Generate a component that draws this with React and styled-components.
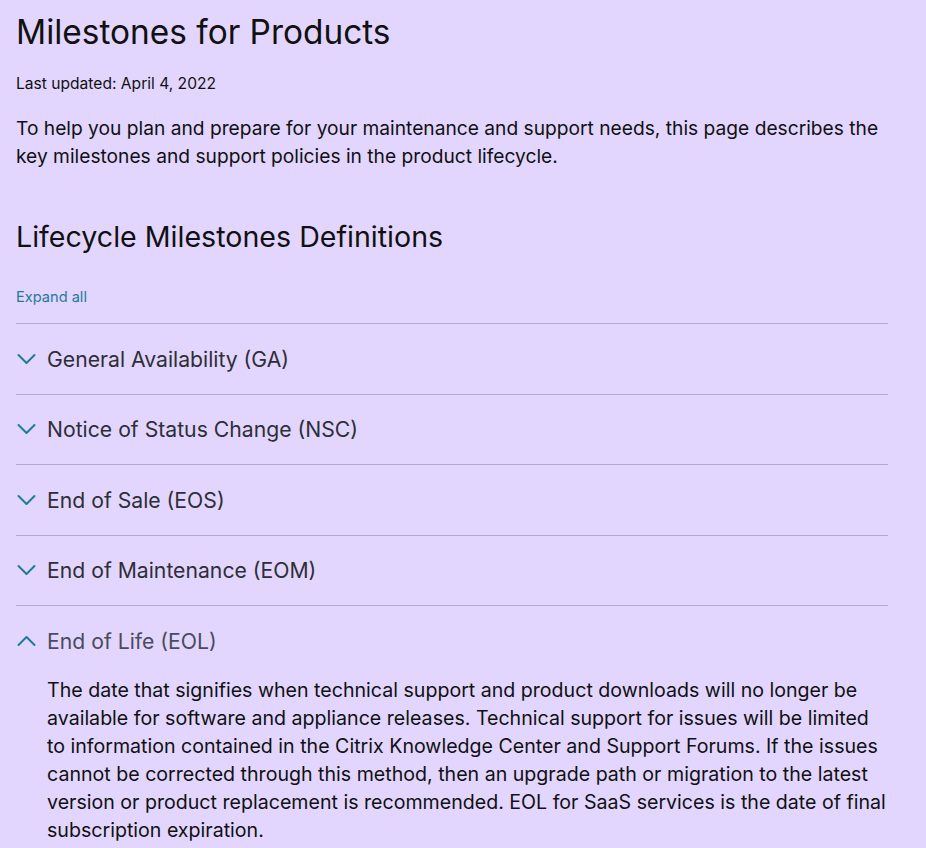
import { useState } from 'react'
import styled, { createGlobalStyle } from 'styled-components'

const GlobalStyle = createGlobalStyle`
    html, body {
        margin: 0;
        padding: 0;
        background: #e2d6fe;
    }
    body {
        font-family: Inter, "Liberation Sans", sans-serif;
        color: #111;
    }
`

const ITEMS = [
    { id: `ga`, title: `General Availability (GA)`, body: `` },
    { id: `nsc`, title: `Notice of Status Change (NSC)`, body: `` },
    { id: `eos`, title: `End of Sale (EOS)`, body: `` },
    { id: `eom`, title: `End of Maintenance (EOM)`, body: `` },
    {
        id: `eol`,
        title: `End of Life (EOL)`,
        body: `The date that signifies when technical support and product downloads will no longer be available for software and appliance releases. Technical support for issues will be limited to information contained in the Citrix Knowledge Center and Support Forums. If the issues cannot be corrected through this method, then an upgrade path or migration to the latest version or product replacement is recommended. EOL for SaaS services is the date of final subscription expiration.`,
    },
]

const Page = styled.main`
    padding: 12px 16px 0 16px;
    width: 872px;
`

const Title = styled.h1`
    margin: 0;
    font-size: 33.4px;
    font-weight: 400;
    line-height: 40px;
    color: #111;
`

const Updated = styled.p`
    margin: 22px 0 0;
    font-size: 15.6px;
    line-height: 20px;
`

const Intro = styled.p`
    margin: 20px 0 0;
    font-size: 19.2px;
    line-height: 28px;
`

const Heading = styled.h2`
    margin: 49px 0 0;
    font-size: 28.6px;
    font-weight: 400;
    line-height: 36px;
`

const ExpandLink = styled.a`
    display: inline-block;
    margin: 32px 0 16px;
    font-size: 14.6px;
    line-height: 20px;
    color: #1f7a99;
    cursor: pointer;
`

const List = styled.div`
    display: flex;
    flex-direction: column;
`

const Item = styled.section`
    border-top: 1px solid #b4aacb;
`

const Trigger = styled.button`
    display: flex;
    align-items: center;
    gap: 7px;
    width: 100%;
    height: 69.5px;
    padding: 0;
    border: 0;
    background: transparent;
    font: inherit;
    font-size: 21.2px;
    color: ${ ( { $open } ) => $open ? `#4a4b5c` : `#2e2e36` };
    text-align: left;
    cursor: pointer;
`

const Chevron = styled.svg`
    width: 24px;
    height: 24px;
    flex-shrink: 0;
    color: #1b7d97;
    transform: ${ ( { $open } ) => $open ? `scaleY(-1)` : `none` };
`

const Body = styled.p`
    margin: 0 0 0 31px;
    padding-bottom: 20px;
    font-size: 19.6px;
    line-height: 28px;
    color: #111;
`

export default function App() {

    const [ open, set_open ] = useState( { eol: true } )

    const toggle = id => set_open( prev => ( { ...prev, [ id ]: !prev[ id ] } ) )

    return <>
        <GlobalStyle />
        <Page>
            <Title>Milestones for Products</Title>
            <Updated>Last updated: April 4, 2022</Updated>
            <Intro>To help you plan and prepare for your maintenance and support needs, this page describes the key milestones and support policies in the product lifecycle.</Intro>
            <Heading>Lifecycle Milestones Definitions</Heading>
            <ExpandLink onClick={ () => set_open( Object.fromEntries( ITEMS.map( i => [ i.id, true ] ) ) ) }>Expand all</ExpandLink>
            <List>
                { ITEMS.map( item => <Item key={ item.id }>
                    <Trigger $open={ open[ item.id ] } onClick={ () => toggle( item.id ) }>
                        <Chevron $open={ open[ item.id ] } viewBox="0 0 24 24" fill="none" stroke="currentColor" strokeWidth="2" strokeLinecap="round" strokeLinejoin="round">
                            <path d="M2.5 8l8 8 8-8" />
                        </Chevron>
                        { item.title }
                    </Trigger>
                    { open[ item.id ] && item.body && <Body>{ item.body }</Body> }
                </Item> ) }
            </List>
        </Page>
    </>

}
